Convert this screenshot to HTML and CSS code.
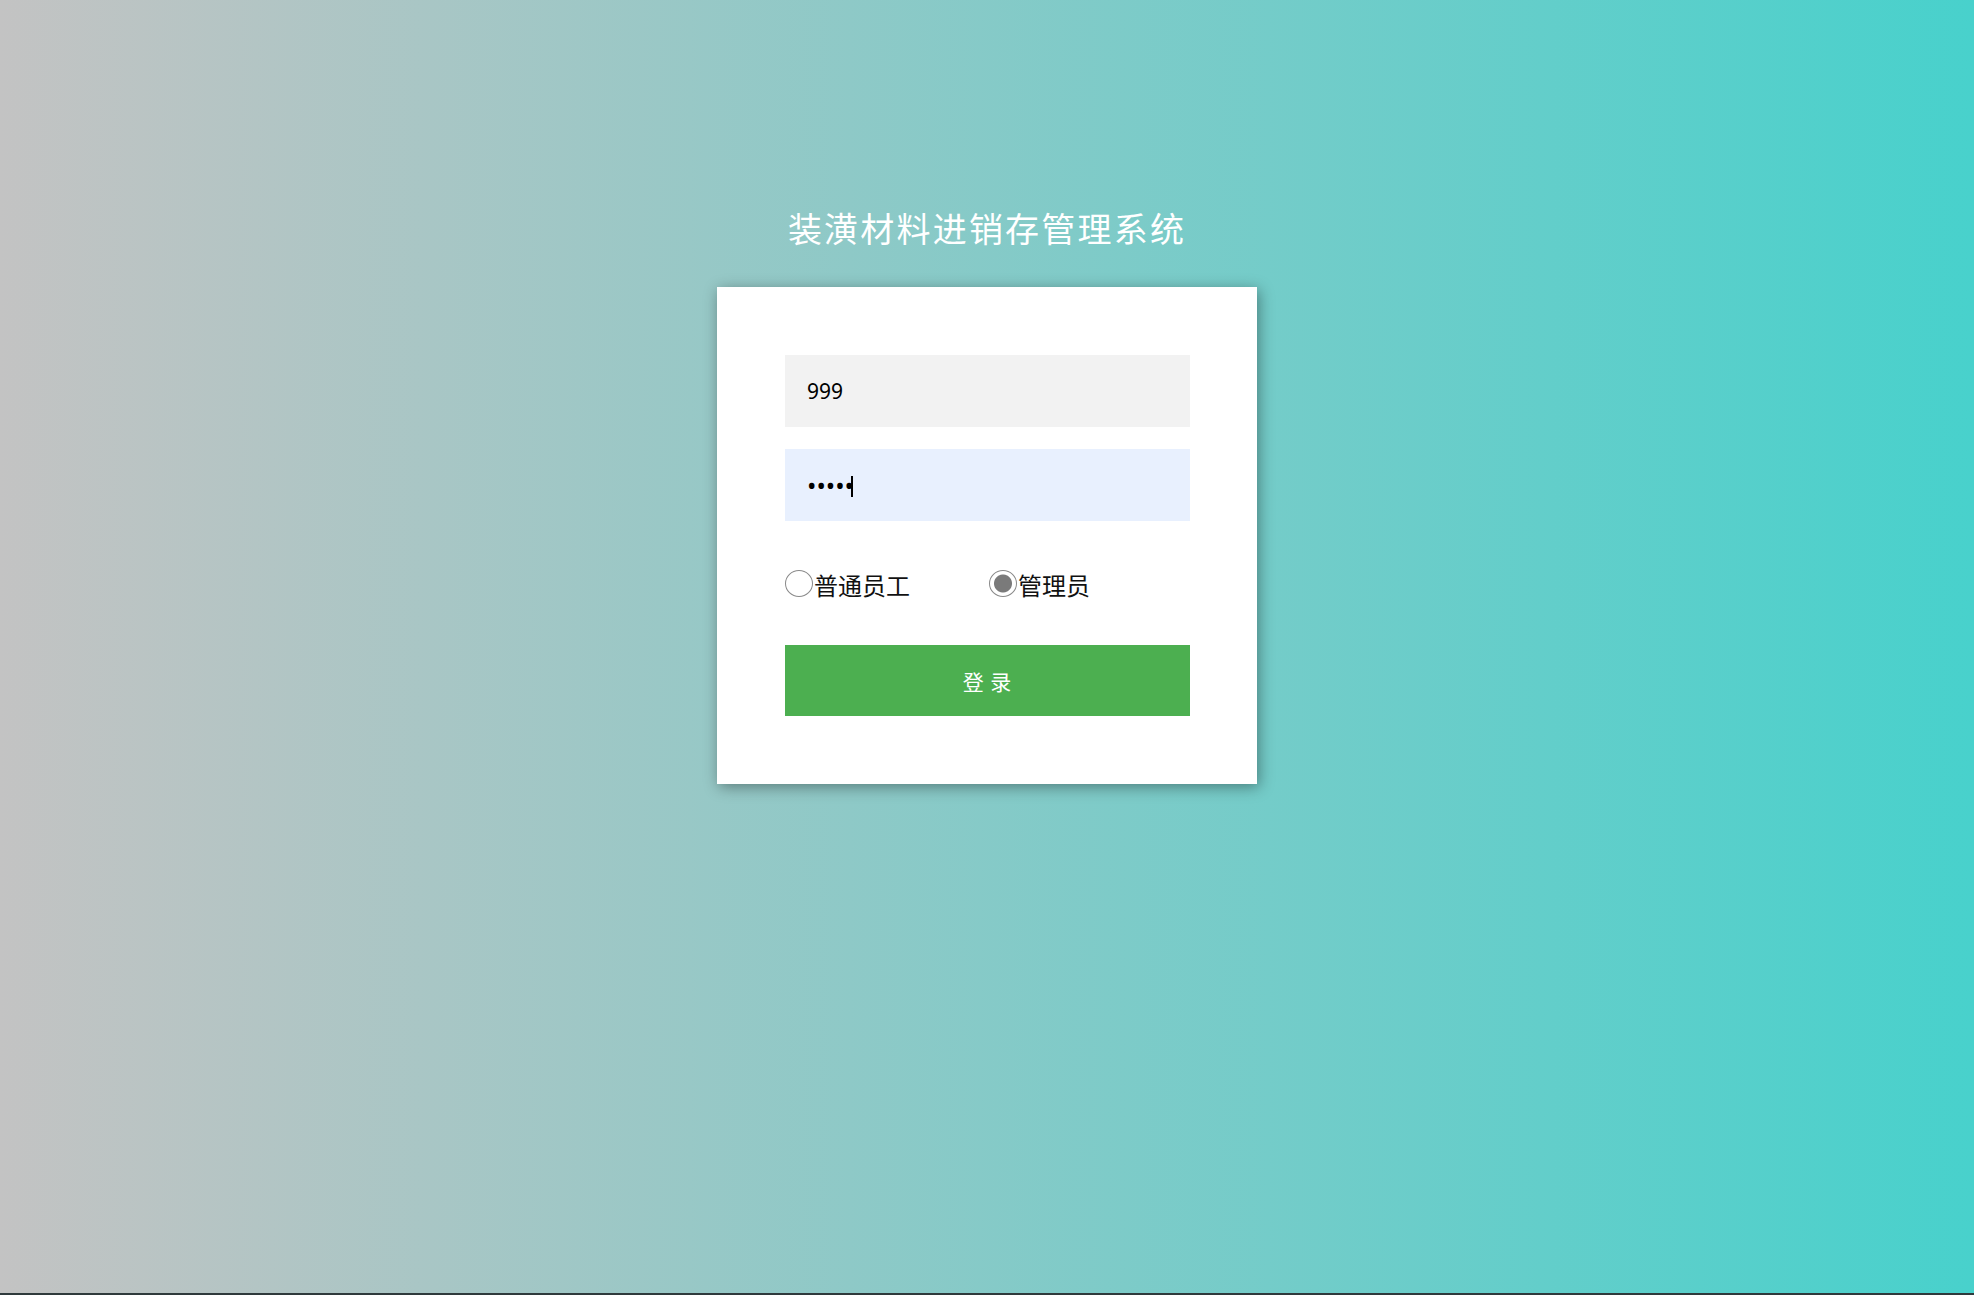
FILE: index.html
```html
<!DOCTYPE html>
<html lang="zh-CN">
<head>
<meta charset="utf-8">
<title>装潢材料进销存管理系统</title>
<link rel="stylesheet" href="styles.css">
</head>
<body>
<div class="page">
  <h1 class="title">装潢材料进销存管理系统</h1>
  <form class="card">
    <input class="field field-user" type="text" value="999">
    <div class="pass-wrap">
      <input class="field field-pass" type="password" value="12345">
      <span class="caret"></span>
    </div>
    <div class="roles">
      <label class="role role-first"><input type="radio" name="role" class="radio"><span>普通员工</span></label>
      <label class="role"><input type="radio" name="role" class="radio" checked><span>管理员</span></label>
    </div>
    <button type="button" class="submit">登 录</button>
  </form>
</div>
</body>
</html>
```
FILE: styles.css
```css
html, body {
  margin: 0;
  padding: 0;
}
body {
  min-height: 100vh;
  box-sizing: border-box;
  background: linear-gradient(to right, #c3c3c3 0%, #48d1cc 100%);
  border-bottom: 2px solid #2f3a3c;
  font-family: "Noto Sans CJK SC", "Noto Sans", sans-serif;
}
.page {
  display: flex;
  flex-direction: column;
  align-items: center;
  padding-top: 203px;
}
.title {
  margin: 0 0 34px 0;
  height: 50px;
  line-height: 50px;
  font-size: 34px;
  letter-spacing: 2.2px;
  font-weight: 400;
  color: #ffffff;
}
.card {
  width: 540px;
  box-sizing: border-box;
  padding: 68px 67px 68px 68px;
  background: #ffffff;
  box-shadow: 2px 3px 14px rgba(0, 0, 0, 0.38);
  display: flex;
  flex-direction: column;
}
.field {
  display: block;
  width: 405px;
  height: 72px;
  box-sizing: border-box;
  border: none;
  outline: none;
  padding: 0 22px;
  font-family: "Noto Sans", "Open Sans", sans-serif;
  font-size: 21px;
  color: #000000;
}
.field-user {
  background: #f2f2f2;
}
.pass-wrap {
  position: relative;
  margin-top: 22px;
}
.field-pass {
  background: #e8f0fe;
  font-size: 25px;
}
.caret {
  position: absolute;
  left: 66px;
  top: 27px;
  width: 2px;
  height: 21px;
  background: #000;
}
.roles {
  display: flex;
  align-items: center;
  height: 40px;
  margin: 44px 0 40px 0;
}
.role {
  display: flex;
  align-items: center;
  font-size: 24px;
  color: #111;
  line-height: 1;
}
.role-first {
  margin-right: 79px;
}
.radio {
  appearance: none;
  -webkit-appearance: none;
  width: 28px;
  height: 27px;
  margin: 0 1px 0 0;
  border: 1.5px solid #8a8a8a;
  border-radius: 50%;
  background: #fff;
  box-sizing: border-box;
  position: relative;
  top: -2px;
}
.radio:checked {
  background: radial-gradient(circle, #7a7a7a 0 8.5px, #ffffff 9.5px);
}
.submit {
  width: 405px;
  height: 71px;
  border: none;
  background: #4caf50;
  color: #ffffff;
  font-family: "Noto Sans CJK SC", sans-serif;
  font-size: 21px;
  letter-spacing: 1px;
  cursor: pointer;
}
```
